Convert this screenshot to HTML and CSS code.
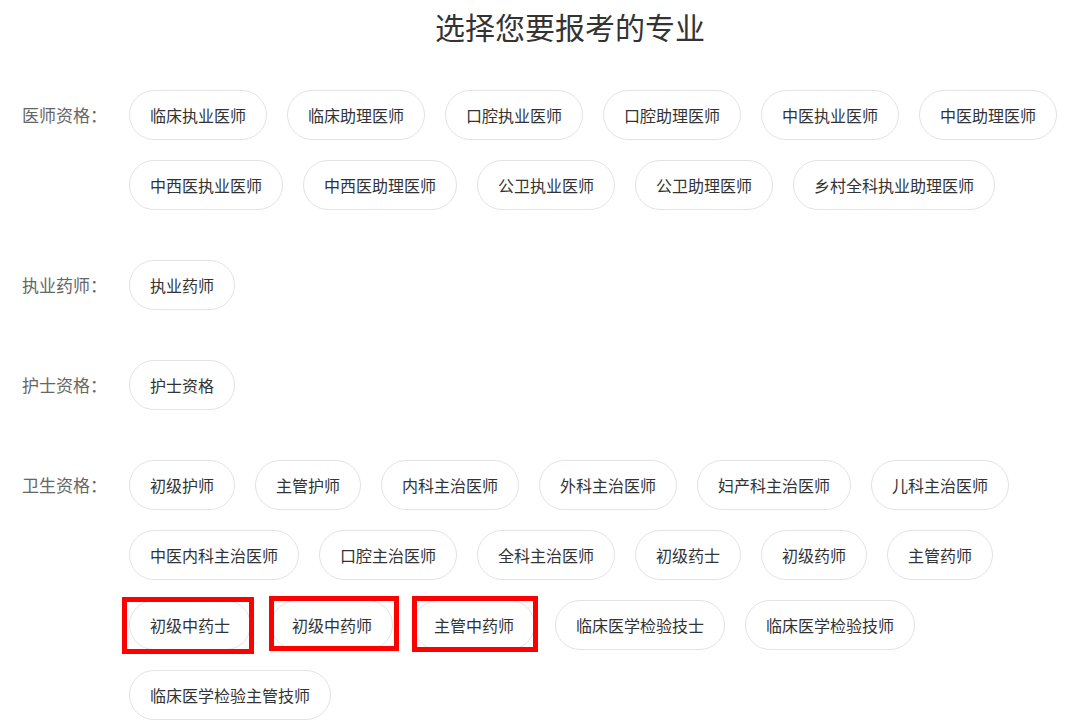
FILE: index.html
```html
<!DOCTYPE html>
<html lang="zh-CN">
<head>
    <meta charset="UTF-8">
    <meta name="viewport" content="width=device-width, initial-scale=1.0">
    <title>选择您要报考的专业</title>
    <link rel="stylesheet" href="styles.css">
</head>
<body>
    <div class="page">
        <h1 class="page-title">选择您要报考的专业</h1>

        <div class="group">
            <div class="group-label">医师资格：</div>
            <ul class="major-list">
                <li class="major">临床执业医师</li>
                <li class="major">临床助理医师</li>
                <li class="major">口腔执业医师</li>
                <li class="major">口腔助理医师</li>
                <li class="major">中医执业医师</li>
                <li class="major">中医助理医师</li>
                <li class="major">中西医执业医师</li>
                <li class="major">中西医助理医师</li>
                <li class="major">公卫执业医师</li>
                <li class="major">公卫助理医师</li>
                <li class="major">乡村全科执业助理医师</li>
            </ul>
        </div>

        <div class="group">
            <div class="group-label">执业药师：</div>
            <ul class="major-list">
                <li class="major">执业药师</li>
            </ul>
        </div>

        <div class="group">
            <div class="group-label">护士资格：</div>
            <ul class="major-list">
                <li class="major">护士资格</li>
            </ul>
        </div>

        <div class="group">
            <div class="group-label">卫生资格：</div>
            <ul class="major-list">
                <li class="major">初级护师</li>
                <li class="major">主管护师</li>
                <li class="major">内科主治医师</li>
                <li class="major">外科主治医师</li>
                <li class="major">妇产科主治医师</li>
                <li class="major">儿科主治医师</li>
                <li class="major">中医内科主治医师</li>
                <li class="major">口腔主治医师</li>
                <li class="major">全科主治医师</li>
                <li class="major">初级药士</li>
                <li class="major">初级药师</li>
                <li class="major">主管药师</li>
                <li class="major marked mark-a">初级中药士</li>
                <li class="major marked mark-b">初级中药师</li>
                <li class="major marked mark-c">主管中药师</li>
                <li class="major">临床医学检验技士</li>
                <li class="major">临床医学检验技师</li>
                <li class="major">临床医学检验主管技师</li>
            </ul>
        </div>
    </div>
</body>
</html>
```

FILE: styles.css
```css
* {
    margin: 0;
    padding: 0;
    box-sizing: border-box;
}

html {
    overflow-x: hidden;
}

body {
    font-family: "Noto Sans CJK SC", "Noto Sans", sans-serif;
    background: #fff;
    color: #333;
}

.page {
    width: 1140px;
    padding-top: 6px;
}

.page-title {
    font-size: 30px;
    font-weight: normal;
    line-height: 40px;
    text-align: center;
    color: #333;
    margin-bottom: 44px;
}

.group {
    display: flex;
    align-items: flex-start;
    padding-left: 22px;
    margin-bottom: 50px;
}

.group-label {
    width: 107px;
    flex-shrink: 0;
    font-size: 17px;
    line-height: 50px;
    color: #666;
    white-space: nowrap;
}

.major-list {
    list-style: none;
    display: flex;
    flex-wrap: wrap;
    gap: 20px;
    width: 950px;
}

.major {
    position: relative;
    height: 50px;
    line-height: 48px;
    padding: 0 20px;
    border: 1px solid #e3e3e3;
    border-radius: 25px;
    font-size: 16px;
    color: #333;
    white-space: nowrap;
    cursor: pointer;
}

/* red annotation boxes */
.marked::after {
    content: "";
    position: absolute;
    border: 5px solid #f00;
}

.mark-a::after {
    top: -4px;
    bottom: -5px;
    left: -8px;
    right: -4px;
}

.mark-b::after {
    top: -5px;
    bottom: -2px;
    left: -3px;
    right: -7px;
}

.mark-c::after {
    top: -5px;
    bottom: -3px;
    left: -2px;
    right: -4px;
}
```
